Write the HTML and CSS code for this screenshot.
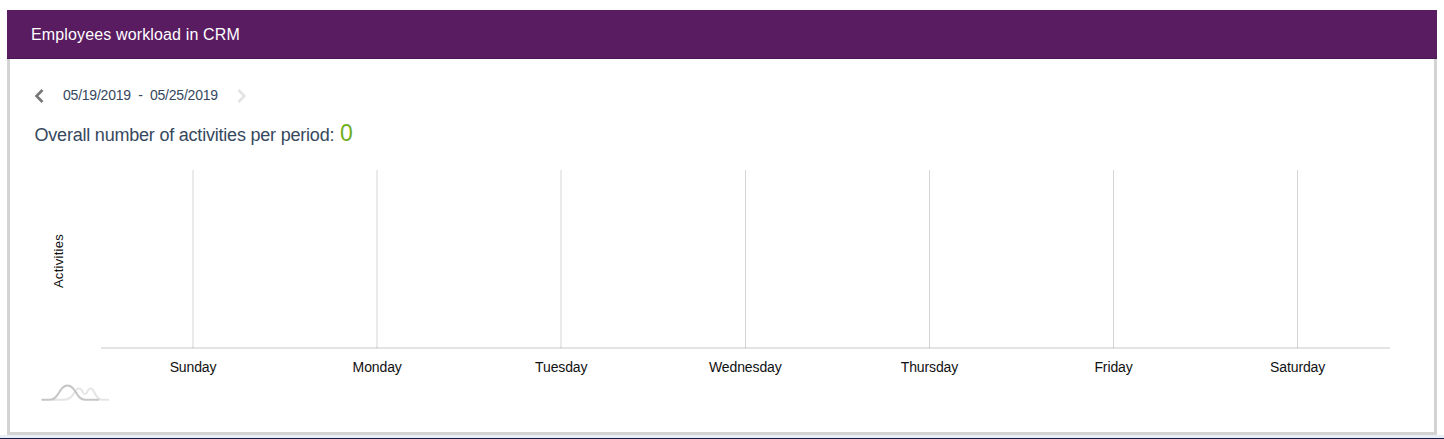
FILE: index.html
```html
<!DOCTYPE html>
<html lang="en">
<head>
<meta charset="utf-8">
<title>Employees workload in CRM</title>
<link rel="stylesheet" href="styles.css">
</head>
<body>
<section class="widget">
  <header class="widget-header">Employees workload in CRM</header>
  <div class="widget-body">
    <div class="period">
      <svg class="arrow arrow-prev" width="10" height="14" viewBox="0 0 10 14"><path d="M8.500 1 2.500 7l6 6"/></svg>
      <span class="dates">05/19/2019&nbsp; -&nbsp; 05/25/2019</span>
      <svg class="arrow arrow-next" width="10" height="14" viewBox="0 0 10 14"><path d="m2.500 1 6 6-6 6"/></svg>
    </div>
    <div class="summary"><span class="summary-label">Overall number of activities per period:</span><span class="summary-count">0</span></div>
    <div class="chart">
      <div class="axis-title"><span>Activities</span></div>
      <div class="plot">
        <svg class="grid" width="1290" height="180" viewBox="0 0 1290 180">
          <path class="base-line" d="M0 178h1289"/>
          <path class="grid-line" d="M92 0v178M276 0v178M460 0v178M644.5 0v178M828.5 0v178M1012.500 0v178M1196.500 0v178"/>
        </svg>
        <div class="days"><span>Sunday</span><span>Monday</span><span>Tuesday</span><span>Wednesday</span><span>Thursday</span><span>Friday</span><span>Saturday</span></div>
      </div>
    </div>
    <svg class="logo" width="70" height="20" viewBox="0 0 70 20">
      <path class="wave-light" d="M11 16.7H23C33 16.7 33 5.5 38 5.5C42 5.5 41 11 44 11C47 11 46 5.5 49.5 5.5C54 5.5 54 16.7 61 16.7H68"/>
      <path class="wave-dark" d="M.5 16.7H9C18 16.7 18 2.5 26.500 2.500C35 2.500 35 16.700 44 16.700H58"/>
    </svg>
  </div>
</section>
<div class="page-bottom"></div>
</body>
</html>
```
FILE: styles.css
```css
* { box-sizing: border-box; }
body {
  margin: 0;
  padding-top: 10px;
  height: 439px;
  overflow: hidden;
  background: #fff;
  font-family: "Liberation Sans", Arial, sans-serif;
}
.widget {
  display: flex;
  flex-direction: column;
  width: 1430px;
  height: 425px;
  margin-left: 7px;
}
.widget-header {
  height: 49px;
  padding: 1px 0 0 24px;
  background: #591c61;
  border-bottom: 1px solid #4b1454;
  color: #fff;
  font-size: 16px;
  letter-spacing: .14px;
  line-height: 48px;
}
.widget-body {
  display: flex;
  flex: 1;
  flex-direction: column;
  padding: 27px 0 0 24px;
  border: 3px solid #d3d3d3;
  border-top: 0;
  color: #36485d;
}
.period {
  display: flex;
  align-items: center;
  height: 20px;
  font-size: 14px;
}
.arrow { fill: none; stroke-width: 2.6; }
.arrow-prev { stroke: #777; }
.arrow-next { margin-left: 18px; stroke: #e3e3e3; }
.dates {
  width: 155px;
  margin-left: 19px;
  padding-bottom: 2px;
  letter-spacing: -.22px;
  white-space: nowrap;
}
.summary {
  display: flex;
  align-items: baseline;
  height: 36px;
  margin-top: 13px;
  line-height: 28px;
}
.summary-label {
  width: 306px;
  padding-left: .5px;
  font-size: 18px;
  letter-spacing: -.21px;
  white-space: nowrap;
}
.summary-count { color: #6eae20; font-size: 23px; }
.chart {
  display: flex;
  height: 213px;
  margin-top: 15px;
  color: #111;
}
.axis-title {
  display: flex;
  align-items: center;
  justify-content: center;
  width: 48px;
  height: 182px;
  margin-right: 19px;
  font-size: 13px;
  letter-spacing: .28px;
}
.axis-title span { writing-mode: vertical-rl; transform: rotate(180deg); }
.plot { width: 1290px; }
.grid { display: block; }
.grid-line { fill: none; stroke: #000; stroke-opacity: .17; }
.base-line { stroke: #e4e4e4; stroke-width: 2; }
.days {
  display: grid;
  grid-template-columns: repeat(7, 184.1px);
  margin-top: 9px;
  font-size: 14px;
  letter-spacing: -.12px;
  line-height: 16px;
  text-align: center;
}
.logo { margin: 0 0 0 7px; fill: none; stroke-width: 2; }
.wave-light { stroke: #e5e5e5; }
.wave-dark { stroke: #c6c6c6; }
.page-bottom { height: 4px; background: #e9eef4; border-bottom: 1px solid #171b4b; }
```
